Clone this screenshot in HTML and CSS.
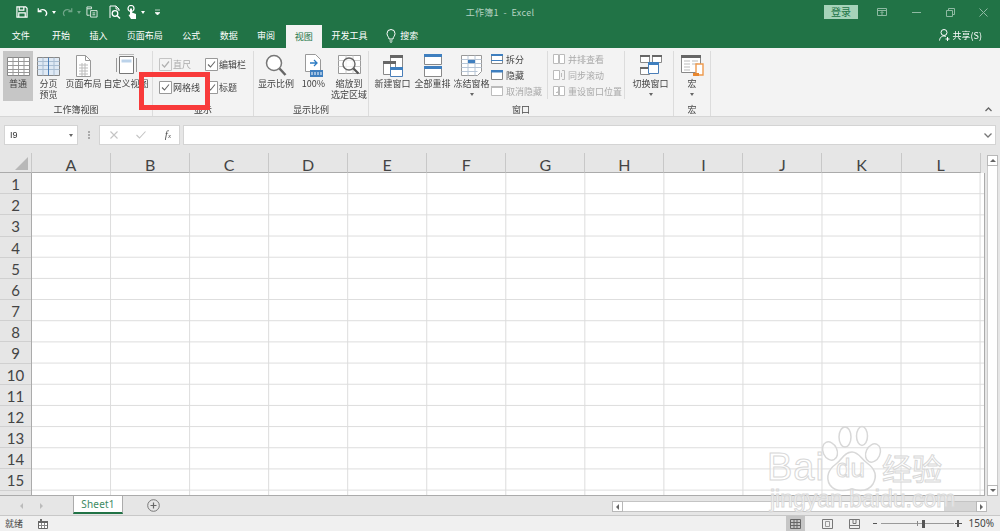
FILE: index.html
```html
<!DOCTYPE html>
<html lang="zh-CN">
<head>
<meta charset="utf-8">
<title>工作簿1 - Excel</title>
<link rel="stylesheet" href="styles.css">
</head>
<body>
<div class="app">
  <header class="titlebar">
    <div class="qat">
      <svg class="q q-save" width="12" height="12" viewBox="0 0 13 13"><path d="M1 1h9.500L12 2.500V12H1z M3.500 1v3.500h5V1 M3 12V7.500h7V12" fill="none" stroke="#fff" stroke-width="1.300"/></svg>
      <svg class="q q-undo" width="11" height="11" viewBox="0 0 13 13"><path d="M1.500 1.500v4h4M2 5.500c2.500-3 6-3 8-1s1.500 4.500 0 6" fill="none" stroke="#fff" stroke-width="1.500"/></svg>
      <i class="caret caret-w"></i>
      <svg class="q q-redo" width="11" height="11" viewBox="0 0 13 13"><path d="M11.500 1.500v4h-4M11 5.500c-2.500-3-6-3-8-1s-1.500 4.500 0 6" fill="none" stroke="#6fa588" stroke-width="1.500"/></svg>
      <i class="caret caret-d"></i>
      <svg class="q q-copy" width="12" height="12" viewBox="0 0 13 13"><path d="M1 1h5v2H1zM1 3v7h3M5 5h7v7H5zM7 7.500h3M7 9.500h3" fill="none" stroke="#e4efe8" stroke-width="1"/></svg>
      <svg class="q q-prev" width="13" height="14" viewBox="0 0 13 14"><path d="M2 13V1h6l3 3v2M8 1v3h3" fill="none" stroke="#fff" stroke-width="1"/><circle cx="7" cy="8.500" r="2.800" fill="none" stroke="#fff" stroke-width="1.300"/><path d="M9 10.500l3 3" stroke="#fff" stroke-width="1.500"/></svg>
      <svg class="q q-touch" width="13" height="15" viewBox="0 0 13 15"><circle cx="5" cy="3.500" r="3" fill="none" stroke="#fff" stroke-width="1.200"/><path d="M4 3.500h2v4l4 1.500v5H5L2.500 10 4 9.500z" fill="#fff"/></svg>
      <i class="caret caret-w caret-touch"></i>
      <svg class="q q-more" width="5" height="7" viewBox="0 0 6 8"><path d="M0 1h6M0 4h6l-3 3z" fill="#fff" stroke="#fff" stroke-width=".8"/></svg>
    </div>
    <div class="doc-title">工作簿1&nbsp; -&nbsp; Excel</div>
    <div class="win">
      <span class="login">登录</span>
      <svg class="win-ribbon" width="10" height="8" viewBox="0 0 10 8"><path d="M.5.500h9v7h-9zM.5 2.500h9M5 7V4M3.500 5L5 3.500 6.500 5" fill="none" stroke="#8fbaa3"/></svg>
      <svg class="win-min" width="9" height="1" viewBox="0 0 9 1"><path d="M0 .5h9" stroke="#8fbaa3"/></svg>
      <svg class="win-max" width="9" height="9" viewBox="0 0 9 9"><path d="M.5 2.500h6v6h-6zM2.500 2.500v-2h6v6h-2" fill="none" stroke="#8fbaa3"/></svg>
      <svg class="win-close" width="9" height="9" viewBox="0 0 9 9"><path d="M.5.500l8 8M8.500.500l-8 8" stroke="#8fbaa3"/></svg>
    </div>
  </header>

  <nav class="tabs">
    <span class="tab tab-file">文件</span>
    <span class="tab">开始</span>
    <span class="tab">插入</span>
    <span class="tab">页面布局</span>
    <span class="tab">公式</span>
    <span class="tab">数据</span>
    <span class="tab">审阅</span>
    <span class="tab tab-active">视图</span>
    <span class="tab">开发工具</span>
    <span class="search">
      <svg width="10" height="14" viewBox="0 0 10 14"><path d="M3 10C3 8 1 7 1 4.500a4 4 0 0 1 8 0C9 7 7 8 7 10zM3.500 12h3M4.500 13.500h1" fill="none" stroke="#fff"/></svg>
      搜索
    </span>
    <span class="share">
      <svg width="11" height="12" viewBox="0 0 11 12"><circle cx="5" cy="3.500" r="3" fill="none" stroke="#fff"/><path d="M.5 11.500C1 8 3 7 5 7c1 0 1.500.3 2 .5M6.500 10h4M8.500 8v4" fill="none" stroke="#fff"/></svg>
      共享(S)
    </span>
  </nav>

  <section class="ribbon">
    <div class="group g-book">
      <div class="cols">
        <div class="big big-active w30 ml3">
          <svg class="ico" width="23" height="23" viewBox="0 0 23 23"><path d="M.5 3.500h22v18H.5z" fill="#fff" stroke="#888"/><path d="M.5 7.500h22M.5 11.500h22M.5 15.500h22M.5 18.500h22M6 3.500v18M11.500 3.500v18M17 3.500v18" stroke="#999" fill="none"/></svg>
          <span>普通</span>
        </div>
        <div class="big w31">
          <svg class="ico" width="23" height="23" viewBox="0 0 23 23"><path d="M.5 3.500h22v18H.5z" fill="#dfe9f4" stroke="#888"/><path d="M.5 7.500h22M.5 11.500h22M.5 15.500h22M6 3.500v18M17 3.500v18" stroke="#a9bdd2" fill="none"/><path d="M11.500 3.500v18" stroke="#4a7eb8"/></svg>
          <span>分页<br>预览</span>
        </div>
        <div class="big w39">
          <svg class="ico" width="15" height="23" viewBox="0 0 15 23"><path d="M.5 1.500h9l5 5v16H.5z" fill="#fff" stroke="#999"/><path d="M9.500 1.500v5h5" fill="none" stroke="#999"/><path d="M3 11h9M3 14h9M3 17h9M3 20h9M6 9v13M9 9v13" stroke="#bbb"/></svg>
          <span>页面布局</span>
        </div>
        <div class="big w46">
          <svg class="ico" width="21" height="23" viewBox="0 0 21 23"><path d="M.5 4v14M20.500 4v14" stroke="#999"/><path d="M3.500 2.500h14v17h-14z" fill="#fff" stroke="#777"/><path d="M5.500 5.500h10v3h-10z" fill="#bcd3ea"/><path d="M3 0.500h15" stroke="#bbb"/></svg>
          <span>自定义视图</span>
        </div>
      </div>
      <div class="glabel">工作簿视图</div>
    </div>

    <div class="group g-show">
      <div class="cols">
        <div class="checks c1">
          <div class="check off"><svg width="13" height="13" viewBox="0 0 13 13"><path d="M.5.500h12v12H.5z" fill="#f3f3f3" stroke="#c4c4c4"/><path d="M3 6.500l2.500 2.500L10 3.500" fill="none" stroke="#b0b0b0" stroke-width="1.200"/></svg>直尺</div>
          <div class="check"><svg width="13" height="13" viewBox="0 0 13 13"><path d="M.5.500h12v12H.5z" fill="#fff" stroke="#999"/><path d="M3 6.500l2.500 2.500L10 3.500" fill="none" stroke="#666" stroke-width="1.100"/></svg>网格线</div>
        </div>
        <div class="checks c2">
          <div class="check"><svg width="13" height="13" viewBox="0 0 13 13"><path d="M.5.500h12v12H.5z" fill="#fff" stroke="#999"/><path d="M3 6.500l2.500 2.500L10 3.500" fill="none" stroke="#666" stroke-width="1.100"/></svg>编辑栏</div>
          <div class="check"><svg width="13" height="13" viewBox="0 0 13 13"><path d="M.5.500h12v12H.5z" fill="#fff" stroke="#999"/><path d="M3 6.500l2.500 2.500L10 3.500" fill="none" stroke="#666" stroke-width="1.100"/></svg>标题</div>
        </div>
      </div>
      <div class="glabel">显示</div>
    </div>

    <div class="group g-zoom">
      <div class="cols">
        <div class="big w44">
          <svg class="ico" width="22" height="23" viewBox="0 0 22 23"><circle cx="9" cy="9" r="7.500" fill="#fff" stroke="#777" stroke-width="1.500"/><path d="M14.500 14.500l6 6.500" stroke="#666" stroke-width="2.500"/></svg>
          <span>显示比例</span>
        </div>
        <div class="big w31">
          <svg class="ico" width="18" height="23" viewBox="0 0 18 23"><path d="M.5.500h10l5 5v12H.5z" fill="#fff" stroke="#999"/><path d="M5 9h7M9 6l3 3-3 3" fill="none" stroke="#2d7cc4" stroke-width="1.300"/><path d="M5 16h13v7H5z" fill="#3f7fbf"/><path d="M7 18v3M10 18v3M13 18v3M16 18v3" stroke="#fff"/></svg>
          <span>100%</span>
        </div>
        <div class="big w40">
          <svg class="ico" width="23" height="23" viewBox="0 0 23 23"><path d="M.5 1.500h22v18H.5z" fill="#fff" stroke="#999"/><path d="M.5 6.500h22M8 1.500v18M15 1.500v18M.5 12.500h22" stroke="#ccc"/><circle cx="11" cy="10" r="6" fill="#fff" fill-opacity=".7" stroke="#666" stroke-width="1.400"/><path d="M15.500 14.500l5 5" stroke="#555" stroke-width="2.200"/></svg>
          <span>缩放到<br>选定区域</span>
        </div>
      </div>
      <div class="glabel">显示比例</div>
    </div>

    <div class="group g-window">
      <div class="cols">
        <div class="big w41 ml3">
          <svg class="ico" width="20" height="23" viewBox="0 0 20 23"><path d="M7.500 1.500h12v13h-12zM.5 7.500h12v13H.5z" fill="#fff" stroke="#888"/><path d="M7 1h13v3H7zM0 7h13v3H0z" fill="#666"/><path d="M7.500 13.500h12v9h-12z" fill="#fff" stroke="#4a7eb8"/><path d="M7 13h13v3H7z" fill="#3f7fbf"/></svg>
          <span>新建窗口</span>
        </div>
        <div class="big w39">
          <svg class="ico" width="18" height="23" viewBox="0 0 18 23"><path d="M.5.500h17v10H.5zM.5 12.500h17v10H.5z" fill="#fff" stroke="#888"/><path d="M0 0h18v3H0zM0 12h18v3H0z" fill="#3f7fbf"/></svg>
          <span>全部重排</span>
        </div>
        <div class="big w39">
          <svg class="ico" width="21" height="23" viewBox="0 0 21 23"><path d="M.5 1.500h20v16l-4 4H.5z" fill="#fff" stroke="#999"/><path d="M.5 5.500h20M.5 9.500h20M.5 13.500h20M.5 17.500h16M7 1.500v20M14 1.500v20" stroke="#b8c6d6"/><path d="M7 6h7v3H7z" fill="#3f7fbf"/></svg>
          <span>冻结窗格</span>
          <i class="caret caret-k"></i>
        </div>
        <div class="rows r-a">
          <div class="row"><svg width="12" height="10" viewBox="0 0 12 10"><path d="M.5.500h11v9H.5z" fill="#fff" stroke="#888"/><path d="M0 0h12v2H0zM0 6h12v1H0z" fill="#3f7fbf"/></svg>拆分</div>
          <div class="row"><svg width="12" height="10" viewBox="0 0 12 10"><path d="M.5.500h11v9H.5z" fill="#fff" stroke="#888"/><path d="M0 0h12v2.500H0z" fill="#3f7fbf"/></svg>隐藏</div>
          <div class="row off"><svg width="12" height="10" viewBox="0 0 12 10"><path d="M.5.500h11v9H.5z" fill="#fff" stroke="#bbb"/><path d="M0 0h12v2H0z" fill="#bbb"/></svg>取消隐藏</div>
        </div>
        <div class="rows r-b">
          <div class="row off"><svg width="12" height="10" viewBox="0 0 12 10"><path d="M.5.500h5v9h-5zM6.500.500h5v9h-5z" fill="#fff" stroke="#bbb"/></svg>并排查看</div>
          <div class="row off"><svg width="12" height="10" viewBox="0 0 12 10"><path d="M.5.500h6v9h-6z" fill="#fff" stroke="#bbb"/><path d="M9 .5h2.500v9H9M8.500 3v4" fill="none" stroke="#bbb"/></svg>同步滚动</div>
          <div class="row off"><svg width="12" height="10" viewBox="0 0 12 10"><path d="M.5.500h5v9h-5zM6.500.500h5v9h-5zM3 6l1 1 1.500-2" fill="#fff" stroke="#bbb"/></svg>重设窗口位置</div>
        </div>
        <div class="big w45 switch">
          <svg class="ico" width="22" height="23" viewBox="0 0 22 23"><path d="M.5 1.500h9v7h-9zM12.500 1.500h9v7h-9zM.5 13.500h9v7h-9z" fill="#fff" stroke="#888"/><path d="M0 1h10v2H0zM12 1h10v2H12zM0 13h10v2H0z" fill="#666"/><path d="M8.500 8.500h10v11h-10z" fill="#fff" stroke="#4a7eb8"/><path d="M8 8h11v3H8z" fill="#3f7fbf"/></svg>
          <span>切换窗口</span>
          <i class="caret caret-k"></i>
        </div>
      </div>
      <div class="glabel">窗口</div>
    </div>

    <div class="group g-macro">
      <div class="cols">
        <div class="big w37">
          <svg class="ico" width="23" height="23" viewBox="0 0 23 23"><path d="M.5 1.500h19v17H.5z" fill="#fff" stroke="#888"/><path d="M0 1h20v3H0z" fill="#666"/><path d="M3 7h6M11 7h6M3 10h6M11 10h6M3 13h6M3 16h6" stroke="#bbb"/><path d="M15 10h7v11h-7z" fill="#fff" stroke="#ee9a4d" stroke-width="1.400"/><path d="M12 19h6v3h-6z" fill="#e8872f"/></svg>
          <span>宏</span>
          <i class="caret caret-k"></i>
        </div>
      </div>
      <div class="glabel">宏</div>
    </div>

    <svg class="collapse" width="7" height="5" viewBox="0 0 7 5"><path d="M.5 4L3.500 1l3 3" fill="none" stroke="#666" stroke-width="1.300"/></svg>
  </section>

  <section class="formula">
    <div class="namebox"><span>I9</span><i class="caret caret-k"></i></div>
    <div class="fdots"></div>
    <div class="fbtns">
      <svg width="8" height="8" viewBox="0 0 8 8"><path d="M.5.500l7 7M7.500.500l-7 7" stroke="#c4c4c4" stroke-width="1.100"/></svg>
      <svg width="10" height="8" viewBox="0 0 10 8"><path d="M.5 4l3 3L9.500.5" fill="none" stroke="#c4c4c4" stroke-width="1.100"/></svg>
      <span class="fx">f<small>x</small></span>
    </div>
    <div class="finput">
      <svg width="8" height="5" viewBox="0 0 8 5"><path d="M.5.500L4 4 7.500.5" fill="none" stroke="#777" stroke-width="1.300"/></svg>
    </div>
  </section>

  <section class="sheet">
    <div class="sheet-main">
      <div class="colheads">
        <div class="corner"><i></i></div>
        <div class="ch">A</div><div class="ch">B</div><div class="ch">C</div><div class="ch">D</div>
        <div class="ch">E</div><div class="ch">F</div><div class="ch">G</div><div class="ch">H</div>
        <div class="ch">I</div><div class="ch">J</div><div class="ch">K</div><div class="ch">L</div>
      </div>
      <div class="sheet-body">
        <div class="rowheads">
          <div class="rh">1</div><div class="rh">2</div><div class="rh">3</div><div class="rh">4</div><div class="rh">5</div>
          <div class="rh">6</div><div class="rh">7</div><div class="rh">8</div><div class="rh">9</div><div class="rh">10</div>
          <div class="rh">11</div><div class="rh">12</div><div class="rh">13</div><div class="rh">14</div><div class="rh">15</div>
        </div>
        <div class="cells"></div>
      </div>
    </div>
    <div class="vscroll">
      <div class="sbtn"><i class="tri tri-up"></i></div>
      <div class="vtrack"></div>
      <div class="sbtn"><i class="tri tri-down"></i></div>
    </div>
  </section>

  <section class="sheetbar">
    <div class="nav"><i class="tri tri-left pale"></i><i class="tri tri-right pale"></i></div>
    <div class="sheet-tab">Sheet1</div>
    <svg class="add" width="13" height="13" viewBox="0 0 13 13"><circle cx="6.500" cy="6.500" r="5.800" fill="none" stroke="#777"/><path d="M3.500 6.500h6M6.500 3.500v6" stroke="#666" stroke-width="1.200"/></svg>
    <div class="hscroll">
      <div class="sbtn"><i class="tri tri-left"></i></div>
      <div class="htrack"><div class="hthumb"></div></div>
      <div class="sbtn"><i class="tri tri-right"></i></div>
    </div>
  </section>

  <footer class="status">
    <span class="ready">就绪</span>
    <svg class="macro-ico" width="10" height="10" viewBox="0 0 10 10"><path d="M.5 2.500h9v7h-9z" fill="#fff" stroke="#666"/><path d="M0 2h10v2H0zM2 0h2v2H2z" fill="#666"/><path d="M3.500 4v5M6.500 4v5M1 6.500h8" stroke="#888"/></svg>
    <div class="status-right">
      <div class="vbtn vbtn-active"><svg width="11" height="10" viewBox="0 0 11 10"><path d="M.5.500h10v9H.5zM.5 3.500h10M.5 6.500h10M4 .5v9M7 .5v9" fill="none" stroke="#666"/></svg></div>
      <div class="vbtn"><svg width="11" height="10" viewBox="0 0 11 10"><path d="M.5.500h10v9H.5z" fill="none" stroke="#777"/><path d="M3.500 2.500h4v5h-4z" fill="none" stroke="#999"/></svg></div>
      <div class="vbtn"><svg width="11" height="10" viewBox="0 0 11 10"><path d="M.5.500h10v9H.5zM.5 6.500h10M4 .5v4h3V.5" fill="none" stroke="#777"/></svg></div>
      <span class="zminus"></span>
      <div class="slider"><i class="tick"></i><i class="thumb"></i></div>
      <span class="zplus"></span>
      <span class="pct">150%</span>
    </div>
  </footer>

  <div class="frame"></div>

  <div class="mark">
    <svg class="paw" width="70" height="72" viewBox="0 0 70 72">
      <g fill="#fff" fill-opacity=".55" stroke="#d8d8d8" stroke-width="1.500">
        <ellipse cx="25" cy="12" rx="6" ry="10"/>
        <ellipse cx="42" cy="11" rx="5.500" ry="9.500"/>
        <ellipse cx="10" cy="26" rx="7" ry="9.500" transform="rotate(-25 10 26)"/>
        <ellipse cx="53" cy="28" rx="7" ry="9.500" transform="rotate(25 53 28)"/>
        <path d="M32 27c7 0 9 7 15 11 7 5 11 12 6 21-5 8-14 7-21 5-7 2-17 3-22-4-5-8-1-16 6-21 6-4 8-12 16-12z"/>
      </g>
    </svg>
    <span class="mk mk-bai">Bai</span>
    <span class="mk mk-du">du</span>
    <span class="mk mk-jy">经验</span>
    <span class="mk mk-url">jingyan.baidu.com</span>
  </div>
</div>
</body>
</html>
```
FILE: styles.css
```css
* { box-sizing: border-box; }
html, body { margin: 0; padding: 0; overflow: hidden; }
body { background: #e6e6e6; }
i { display: block; }

.app {
  position: relative;
  width: 1000px;
  height: 531px;
  display: flex;
  flex-direction: column;
  overflow: hidden;
  font: 9px/11px "Noto Sans CJK SC", "Noto Sans", sans-serif;
  color: #444;
  filter: blur(.35px);
}

/* carets */
.caret { width: 0; height: 0; border: 2.500px solid transparent; border-bottom-width: 0; border-top-width: 3px; }
.caret-w { border-top-color: #fff; }
.caret-d { border-top-color: #6fa588; }
.caret-k { border-top-color: #666; }

/* title bar */
.titlebar {
  flex: 0 0 24px;
  display: grid;
  grid-template-columns: 1fr auto 1fr;
  align-items: center;
  background: #217346;
  color: #cfe3d8;
}
.qat { display: flex; align-items: center; padding-left: 16px; }
.q-undo { margin-left: 9px; }
.caret-w { margin-left: 4px; }
.q-redo { margin-left: 6px; }
.caret-d { margin-left: 4px; }
.q-copy { margin-left: 5px; }
.q-prev { margin-left: 10px; }
.q-touch { margin-left: 5px; }
.caret-touch { margin-left: 2px; }
.q-more { margin-left: 10px; }
.doc-title { font-size: 9px; letter-spacing: .3px; color: #b5d2c2; }
.win { display: flex; align-items: center; justify-content: flex-end; }
.login {
  width: 34px; height: 14px; margin-right: 19px;
  background: #a5d3b9; color: #217346;
  font-size: 10px; line-height: 14px; text-align: center;
}
.win-ribbon { margin-right: 25px; }
.win-min { margin-right: 25px; }
.win-max { margin-right: 24px; }
.win-close { margin-right: 12px; }

/* tabs */
.tabs {
  flex: 0 0 24px;
  display: flex;
  align-items: stretch;
  padding-left: 2px;
  background: #217346;
  color: #fff;
}
.tab { display: flex; align-items: center; padding: 0 9.700px 1px; height: 24px; }
.tab-file { margin-right: 3px; }
.tab-active {
  margin-top: 1px; height: 23px; padding: 0 9px 1px; margin-left: 1px;
  background: #f3f3f3; color: #217346;
}
.search { display: flex; align-items: center; gap: 4px; margin-left: 9px; padding-bottom: 1px; }
.share { display: flex; align-items: center; gap: 3px; margin-left: auto; margin-right: 18px; padding-bottom: 2px; }

/* ribbon */
.ribbon {
  position: relative;
  flex: 0 0 69px;
  display: flex;
  padding-top: 3px;
  background: #f3f3f3;
  border-bottom: 1px solid #d6d6d6;
}
.group {
  display: flex;
  flex-direction: column;
  height: 65px;
  border-right: 1px solid #dcdcdc;
}
.g-book { width: 153px; }
.g-show { width: 101px; }
.g-zoom { width: 115px; }
.g-window { width: 305px; }
.g-macro { width: 37px; }
.cols { flex: 0 0 53px; display: flex; }
.glabel { height: 12px; line-height: 12px; text-align: center; }
.big { display: flex; flex-direction: column; align-items: center; text-align: center; height: 52px; flex: none; }
.big .ico { flex: none; margin: 3px 0 1px; height: 23px; }
.big .caret { margin-top: 4px; }
.big-active { height: 50px; background: #c6c6c6; }
.w30 { width: 30px; }
.w31 { width: 31px; }
.w37 { width: 36px; }
.w39 { width: 39px; }
.w40 { width: 40px; }
.w41 { width: 41px; }
.w44 { width: 44px; }
.w45 { width: 45px; }
.w46 { width: 46px; }
.ml3 { margin-left: 3px; }

.checks { display: flex; flex-direction: column; padding-top: 2px; }
.c1 { margin-left: 6px; width: 46px; }
.check { display: flex; align-items: center; height: 23px; white-space: nowrap; }
.check svg { margin-right: 1px; }
.off { color: #aaa; }

.rows { display: flex; flex-direction: column; }
.row { display: flex; align-items: center; gap: 3px; height: 17px; white-space: nowrap; }
.r-a { width: 60px; border-right: 1px solid #dcdcdc; height: 48px; }
.r-b { width: 81px; padding-left: 5px; border-right: 1px solid #dcdcdc; height: 48px; }
.switch { margin-left: 3px; }

.collapse { position: absolute; right: 8px; bottom: 4px; }

/* formula bar */
.formula {
  flex: 0 0 36px;
  display: flex;
  align-items: flex-start;
  padding: 8px 4px 0;
  background: #e6e6e6;
}
.namebox, .fbtns, .finput {
  height: 20px;
  background: #fff;
  border: 1px solid #d4d4d4;
  display: flex;
  align-items: center;
}
.namebox { width: 74px; padding: 0 4px 0 5px; justify-content: space-between; font: 9px/11px "Liberation Sans", sans-serif; color: #333; }
.fdots { width: 2px; height: 8px; margin: 6px 9px 0 10px; border-left: 2px dotted #aaa; }
.fbtns { width: 81px; padding: 0 8px 0 10px; justify-content: space-between; }
.fx { font: italic 11px/11px "Liberation Serif", serif; color: #555; }
.fx small { font-size: 7px; }
.finput { flex: 1; margin-left: 3px; justify-content: flex-end; padding-right: 3px; }

/* sheet */
.sheet { flex: 0 0 343px; display: flex; background: #e6e6e6; }
.sheet-main { width: 985px; display: flex; flex-direction: column; border-bottom: 1px solid #ababab; }
.colheads { flex: 0 0 20px; height: 20px; display: flex; }
.corner { flex: 0 0 32px; height: 20px; position: relative; border-right: 1px solid #c8c8c8; border-bottom: 1px solid #ababab; }
.corner i {
  position: absolute; right: 3px; bottom: 2px; width: 0; height: 0;
  border-style: solid; border-width: 0 0 13px 13px;
  border-color: transparent transparent #b8b8b8 transparent;
}
.ch {
  flex: 0 0 79.050px;
  height: 20px;
  text-align: center;
  font: 16px/24px Lato, "Liberation Sans", sans-serif;
  color: #444;
  border-right: 1px solid #c8c8c8;
  border-bottom: 1px solid #ababab;
}
.sheet-body { flex: 1; display: flex; min-height: 0; }
.rowheads { flex: 0 0 32px; border-right: 1px solid #ababab; }
.rh {
  height: 21.180px;
  padding-top: 1px;
  text-align: center;
  font: 15px/21px Lato, "Liberation Sans", sans-serif;
  color: #444;
  border-bottom: 1px solid #d0d0d0;
}
.cells {
  flex: 1;
  background-color: #fff;
  background-image:
    linear-gradient(to right, transparent 78px, #dcdcdc 78px, #dcdcdc 79.050px),
    linear-gradient(to bottom, transparent 20.180px, #dcdcdc 20.180px, #dcdcdc 21.180px);
  background-size: 79.050px 100%, 100% 21.180px;
  border-right: 1px solid #ababab;
}
.vscroll { flex: 1; display: flex; flex-direction: column; padding: 2px 2px 0 2px; }
.sbtn {
  flex: none; width: 11px; height: 11px;
  display: flex; align-items: center; justify-content: center;
  background: #fff; border: 1px solid #b8b8b8;
}
.vtrack { flex: 1; background: #fff; border-left: 1px solid #ccc; border-right: 1px solid #ccc; }
.tri { width: 0; height: 0; border: 3px solid transparent; }
.tri-up { border-top-width: 0; border-bottom: 3px solid #666; }
.tri-down { border-bottom-width: 0; border-top: 3px solid #666; }
.tri-left { border-left-width: 0; border-right: 3px solid #666; }
.tri-right { border-right-width: 0; border-left: 3px solid #666; }
.tri-left.pale { border-right-color: #bbb; }
.tri-right.pale { border-left-color: #bbb; }

/* sheet tabs */
.sheetbar {
  flex: 0 0 20px;
  display: flex;
  align-items: flex-start;
  background: #e6e6e6;
  border-bottom: 1px solid #c8c8c8;
}
.nav { width: 73px; height: 19px; display: flex; align-items: center; gap: 17px; padding-left: 20px; }
.sheet-tab {
  width: 50px; height: 18px;
  background: #fff;
  border-left: 1px solid #ababab;
  border-right: 1px solid #ababab;
  border-bottom: 2px solid #217346;
  color: #3c8a63;
  text-align: center;
  font: 10px/16px "Noto Sans", sans-serif;
  letter-spacing: .2px;
}
.add { margin: 3px 0 0 24px; }
.hscroll { margin-left: auto; width: 375px; height: 11px; margin-top: 5px; margin-right: 13px; display: flex; }
.htrack { flex: 1; background: #d6d6d6; border-top: 1px solid #c4c4c4; border-bottom: 1px solid #c4c4c4; }
.hthumb { width: 321px; height: 100%; background: #fff; }

/* status */
.status {
  flex: 1;
  display: flex;
  align-items: center;
  background: #f0f0f0;
  padding-left: 5px;
}
.ready { color: #444; }
.macro-ico { margin-left: 15px; }
.status-right { margin-left: auto; display: flex; align-items: center; height: 100%; }
.vbtn { width: 26px; margin-right: 1px; height: 100%; display: flex; align-items: center; justify-content: center; }
.vbtn-active { width: 19px; margin-right: 10px; background: #c6c6c6; }
.zminus { width: 4px; height: 1.500px; margin: 0 4px 0 4px; background: #555; }
.slider { position: relative; width: 73px; height: 1px; margin-right: 1px; background: #9a9a9a; }
.slider .tick { position: absolute; left: 36px; top: -2px; width: 1px; height: 5px; background: #888; }
.slider .thumb { position: absolute; left: 41px; top: -3px; width: 3px; height: 8px; background: #555; }
.zplus { position: relative; width: 7px; height: 1.500px; background: #555; }
.zplus::after { content: ""; position: absolute; left: 2.750px; top: -2.750px; width: 1.500px; height: 7px; background: #555; }
.pct { margin: 0 6px 0 7px; font: 10px/11px "Noto Sans", sans-serif; color: #444; }

/* red annotation over the ribbon */
.frame {
  position: absolute;
  left: 139px; top: 72px;
  width: 71px; height: 38px;
  border: 5px solid #f83a3a;
}

/* watermark */
.mark { position: absolute; left: 760px; top: 425px; width: 195px; height: 85px; }
.paw { position: absolute; left: 60px; top: 0; }
.mk {
  position: absolute;
  color: rgba(255,255,255,.6);
  -webkit-text-stroke: 1px #d8d8d8;
  font-family: "Liberation Sans", sans-serif;
  white-space: nowrap;
}
.mk-bai { left: 7px; top: 20px; font-size: 38px; line-height: 44px; letter-spacing: 1px; }
.mk-du { left: 76px; top: 28px; font-size: 26px; line-height: 30px; }
.mk-jy { left: 122px; top: 24px; font: 30px/36px "Noto Sans CJK SC", sans-serif; }
.mk-url { left: 10px; top: 62px; font-size: 23px; line-height: 24px; }
```
